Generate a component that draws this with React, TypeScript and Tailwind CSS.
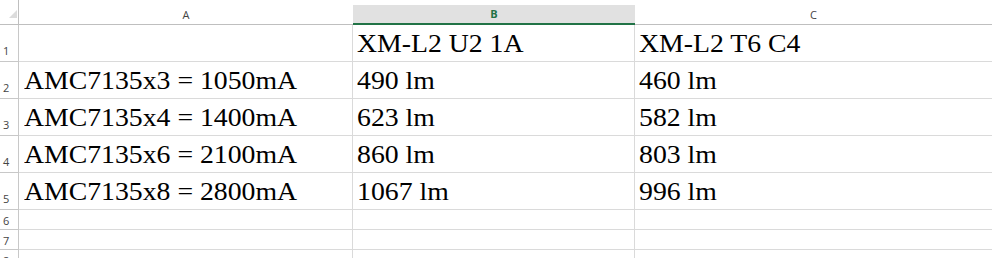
const rows: [string, string, string][] = [
  ["", "XM-L2 U2 1A", "XM-L2 T6 C4"],
  ["AMC7135x3 = 1050mA", "490 lm", "460 lm"],
  ["AMC7135x4 = 1400mA", "623 lm", "582 lm"],
  ["AMC7135x6 = 2100mA", "860 lm", "803 lm"],
  ["AMC7135x8 = 2800mA", "1067 lm", "996 lm"],
];

const Text = ({ children }: { children: string }) => (
  <span className="inline-block origin-left scale-x-[1.11] whitespace-nowrap">{children}</span>
);

const App = () => {
  return (
    <div className="w-[992px] h-[258px] overflow-hidden bg-white text-black font-[family-name:'Liberation_Serif',serif]">
      <div className="grid grid-cols-[19px_334px_282px_1fr]">
        {/* column headers */}
        <div className="h-[25px] border-b border-r border-[#bfbfbf] relative">
          <svg className="absolute right-[1px] bottom-[6px]" width="8" height="8" viewBox="0 0 8 8">
            <polygon points="8,0 8,8 0,8" fill="#dcdcdc" />
          </svg>
        </div>
        <div className="h-[25px] border-b border-[#bfbfbf] flex items-center justify-center pt-[7px] text-[11px] text-[#444] font-[family-name:'Open_Sans',sans-serif]">
          A
        </div>
        <div className="h-[25px] pt-[5px] flex flex-col">
          <div className="flex-1 bg-[#e1e1e1] border-b-2 border-[#217346] flex items-center justify-center pt-[1px] text-[11px] font-bold text-[#217346] font-[family-name:'Open_Sans',sans-serif]">
            B
          </div>
        </div>
        <div className="h-[25px] border-b border-[#bfbfbf] flex items-center justify-center pt-[7px] text-[11px] text-[#444] font-[family-name:'Open_Sans',sans-serif]">
          C
        </div>

        {rows.map((r, i) => (
          <div key={i} className="contents">
            <div className="h-[37px] border-b border-r border-[#c8c8c8] flex items-end pb-[5px] pl-[3px] text-[11px] leading-none text-[#444] font-[family-name:'Open_Sans',sans-serif]">
              {i + 1}
            </div>
            {r.map((c, j) => (
              <div
                key={j}
                className={`h-[37px] border-b border-[#dadada] flex items-end pb-[5px] text-[25px] leading-none ${j < 2 ? "border-r" : ""} ${j === 0 ? "pl-[5px]" : "pl-[4px]"}`}
              >
                {c && <Text>{c}</Text>}
              </div>
            ))}
          </div>
        ))}

        {[6, 7, 8].map((n) => (
          <div key={n} className="contents">
            <div className="h-[20px] border-b border-r border-[#c8c8c8] flex items-end pb-[3px] pl-[3px] text-[11px] leading-none text-[#444] font-[family-name:'Open_Sans',sans-serif]">
              {n}
            </div>
            <div className="h-[20px] border-b border-r border-[#dadada]" />
            <div className="h-[20px] border-b border-r border-[#dadada]" />
            <div className="h-[20px] border-b border-[#dadada]" />
          </div>
        ))}
      </div>
    </div>
  );
};

export default App;
